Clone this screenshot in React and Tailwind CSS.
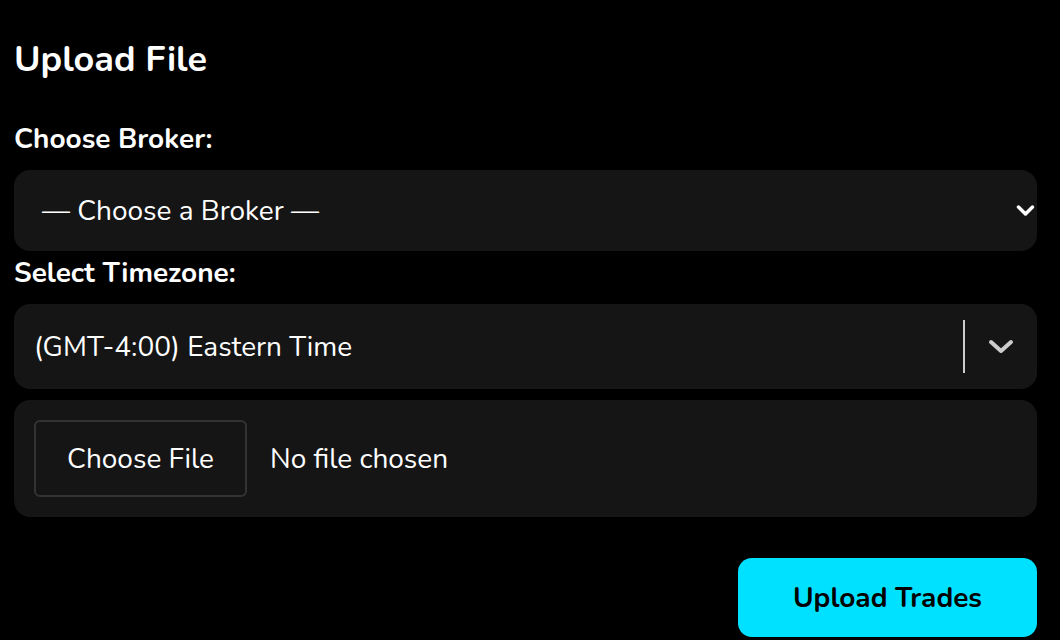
import React from 'react';

const font = { fontFamily: 'Nunito, Lato, sans-serif' };

const App = () => {
  return (
    <div className="min-h-screen bg-black text-white px-[14px] pr-[23px] pt-[40px]" style={font}>
      <h2 className="text-[36px] font-bold leading-[40px]">Upload File</h2>

      <label className="block mt-[43px] text-[28px] font-bold leading-[32px]">Choose Broker:</label>
      <div className="mt-[15px] h-[81px] rounded-[16px] bg-[#151515] flex items-center pl-[28px] pr-[2px]">
        <span className="flex-1 text-[28px]">— Choose a Broker —</span>
        <svg width="19" height="13" viewBox="0 0 19 13">
          <path d="M2.5 3 L9.5 10 L16.5 3" fill="none" stroke="#fff" strokeWidth="3.5" strokeLinecap="round" strokeLinejoin="round" />
        </svg>
      </div>

      <label className="block mt-[6px] text-[28px] font-bold leading-[32px]">Select Timezone:</label>
      <div className="mt-[15px] h-[85px] rounded-[16px] bg-[#151515] flex items-center pl-[20px]">
        <span className="flex-1 text-[28px]">(GMT-4:00) Eastern Time</span>
        <div className="w-[2px] h-[53px] bg-[#cccccc]" />
        <div className="w-[72px] flex items-center justify-center">
          <svg width="26" height="16" viewBox="0 0 26 16">
            <path d="M3 3 L13 12 L23 3" fill="none" stroke="#cccccc" strokeWidth="4" strokeLinecap="round" strokeLinejoin="round" />
          </svg>
        </div>
      </div>

      <div className="mt-[11px] h-[117px] rounded-[16px] bg-[#151515] flex items-center pl-[20px]">
        <div className="w-[213px] h-[77px] rounded-[6px] border-2 border-[#333333] flex items-center justify-center text-[28px]">
          Choose File
        </div>
        <span className="ml-[23px] text-[28px]">No file chosen</span>
      </div>

      <div className="mt-[41px] flex justify-end">
        <button className="w-[299px] h-[79px] rounded-[14px] bg-[#00e1ff] text-black text-[28px] font-bold">
          Upload Trades
        </button>
      </div>
    </div>
  );
};

export default App;
